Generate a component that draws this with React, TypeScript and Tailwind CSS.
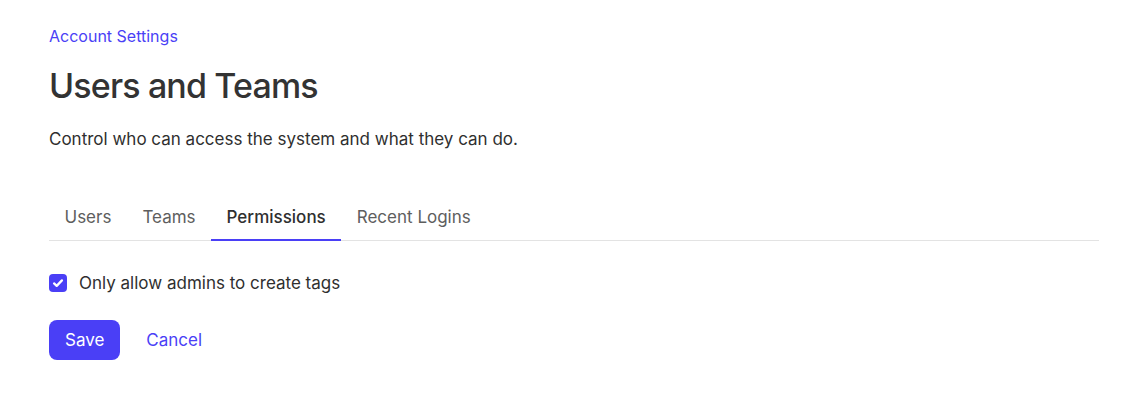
import { useState } from "react";

const tabs = ["Users", "Teams", "Permissions", "Recent Logins"];

const App = () => {
  const [active, setActive] = useState("Permissions");
  const [adminOnly, setAdminOnly] = useState(true);

  return (
    <div className="min-h-screen bg-white pl-[49px] pr-[37px] pt-6 font-['Inter',sans-serif] text-[#2f2f2f]">
      <a href="#" className="block text-base leading-6 text-[#4a3ff6]">
        Account Settings
      </a>
      <h1 className="mt-[18px] text-[34px] font-medium leading-10 tracking-[-0.025em] text-[#333333]">
        Users and Teams
      </h1>
      <p className="mt-[21px] text-[17px] leading-6 text-[#2f2f2f]">
        Control who can access the system and what they can do.
      </p>

      {/* Tabs */}
      <div className="mt-[42px] flex border-b border-[#e3e3e3]">
        {tabs.map((tab) => (
          <button
            key={tab}
            onClick={() => setActive(tab)}
            className={`-mb-px border-b-2 px-[15.5px] pt-3 pb-[10px] text-[17px] leading-6 ${
              active === tab
                ? "border-[#4a3ff6] font-medium text-[#2f2f2f]"
                : "border-transparent text-[#5e5e5e]"
            }`}
          >
            {tab}
          </button>
        ))}
      </div>

      {/* Permission option */}
      <label className="mt-[30px] flex cursor-pointer items-center gap-3 text-[17px] leading-6">
        <span
          onClick={() => setAdminOnly(!adminOnly)}
          className={`flex h-[18px] w-[18px] items-center justify-center rounded-[4px] ${
            adminOnly ? "bg-[#4a3ff6]" : "border border-gray-400 bg-white"
          }`}
        >
          {adminOnly && (
            <svg viewBox="0 0 16 16" className="h-[14px] w-[14px]" fill="none" stroke="white" strokeWidth="2.6" strokeLinecap="round" strokeLinejoin="round">
              <path d="M3.5 8.5l3 2.8L12.5 5" />
            </svg>
          )}
        </span>
        <span>Only allow admins to create tags</span>
      </label>

      {/* Actions */}
      <div className="mt-[25px] flex items-center gap-[26px]">
        <button className="h-10 rounded-lg bg-[#4a3ff6] px-4 text-[17px] leading-6 text-white">
          Save
        </button>
        <button className="text-[17px] leading-6 text-[#4a3ff6]">Cancel</button>
      </div>
    </div>
  );
};

export default App;
